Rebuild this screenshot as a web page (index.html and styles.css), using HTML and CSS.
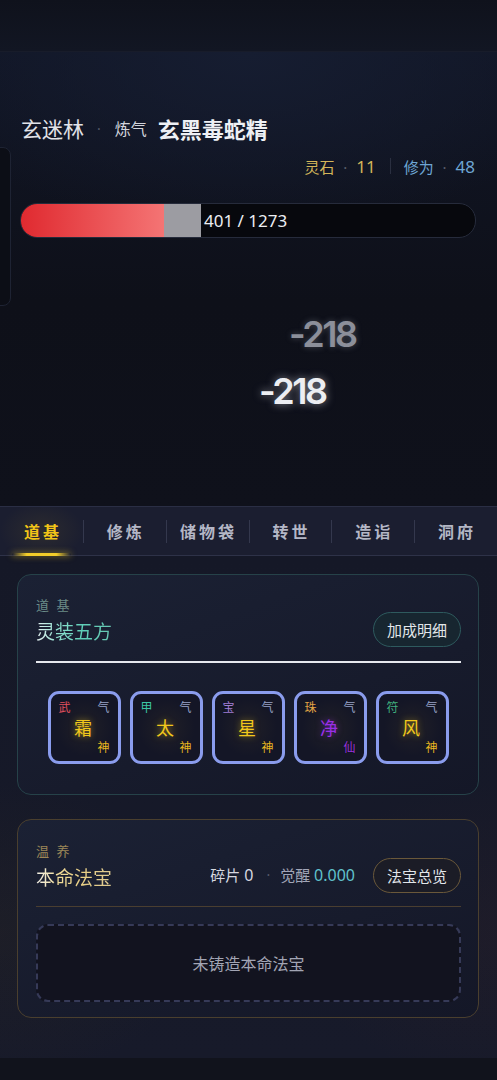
FILE: index.html
```html
<!DOCTYPE html>
<html lang="zh-CN">
<head>
    <meta charset="UTF-8">
    <meta name="viewport" content="width=device-width, initial-scale=1.0">
    <title>玄迷林</title>
    <link rel="stylesheet" href="styles.css">
</head>
<body>

    <div class="topbar"></div>

    <!-- Battle stage -->
    <div class="stage">
        <div class="side-panel"></div>

        <div class="title-row">
            <span class="place">玄迷林</span>
            <span class="dot">·</span>
            <span class="realm">炼气</span>
            <span class="enemy">玄黑毒蛇精</span>
        </div>

        <div class="stats-row">
            <span class="stone">灵石 <i>·</i> <b>11</b></span>
            <span class="sep"></span>
            <span class="cult">修为 <i>·</i> <b>48</b></span>
        </div>

        <div class="hp-bar">
            <div class="hp-fill" style="width: 143px"></div>
            <div class="hp-lost" style="width: 37px"></div>
            <span class="hp-text">401 / 1273</span>
        </div>

        <div class="dmg dmg-old">-218</div>
        <div class="dmg dmg-new">-218</div>
    </div>

    <!-- Tabs -->
    <div class="tabs">
        <div class="tab active">道基</div>
        <div class="tab">修炼</div>
        <div class="tab">储物袋</div>
        <div class="tab">转世</div>
        <div class="tab">造诣</div>
        <div class="tab">洞府</div>
    </div>

    <div class="content">
        <!-- 灵装五方 -->
        <div class="card card-teal">
            <div class="card-head">
                <div>
                    <div class="card-label">道 基</div>
                    <div class="card-title title-teal">灵装五方</div>
                </div>
                <button class="pill pill-teal">加成明细</button>
            </div>
            <div class="rule-white"></div>

            <div class="slots">
                <div class="slot">
                    <span class="s-tl c-red">武</span><span class="s-tr">气</span>
                    <span class="s-mid">霜</span>
                    <span class="s-br">神</span>
                </div>
                <div class="slot">
                    <span class="s-tl c-teal">甲</span><span class="s-tr">气</span>
                    <span class="s-mid">太</span>
                    <span class="s-br">神</span>
                </div>
                <div class="slot">
                    <span class="s-tl c-violet">宝</span><span class="s-tr">气</span>
                    <span class="s-mid">星</span>
                    <span class="s-br">神</span>
                </div>
                <div class="slot">
                    <span class="s-tl c-orange">珠</span><span class="s-tr">气</span>
                    <span class="s-mid purple">净</span>
                    <span class="s-br purple">仙</span>
                </div>
                <div class="slot">
                    <span class="s-tl c-green">符</span><span class="s-tr">气</span>
                    <span class="s-mid">风</span>
                    <span class="s-br">神</span>
                </div>
            </div>
        </div>

        <!-- 本命法宝 -->
        <div class="card card-gold">
            <div class="card-head">
                <div>
                    <div class="card-label label-gold">温 养</div>
                    <div class="card-title title-gold">本命法宝</div>
                </div>
                <div class="treasure-info">
                    <span class="shard">碎片 <b>0</b></span>
                    <span class="dot">·</span>
                    <span class="wake">觉醒 <b>0.000</b></span>
                    <button class="pill pill-gold">法宝总览</button>
                </div>
            </div>
            <div class="rule-gold"></div>
            <div class="empty-box">未铸造本命法宝</div>
        </div>
    </div>

    <div class="footer"></div>

</body>
</html>
```

FILE: styles.css
```css
body {
    margin: 0;
    width: 497px;
    height: 1080px;
    overflow: hidden;
    background: #151827;
    font-family: "Noto Sans", "Noto Sans CJK SC", sans-serif;
    color: #e4e6ee;
}

.topbar {
    height: 52px;
    background: linear-gradient(180deg, #0f121c, #121623);
    border-bottom: 1px solid #181c2a;
    box-sizing: border-box;
}

/* ---------- stage ---------- */
.stage {
    position: relative;
    height: 454px;
    box-sizing: border-box;
    padding: 62px 22px 0 20px;
    background:
        radial-gradient(ellipse 70% 40% at 50% 0%, #161d31 0%, rgba(22, 29, 49, 0) 100%),
        linear-gradient(180deg, #111626 0%, #0e1019 55%, #0f111b 100%);
}

.side-panel {
    position: absolute;
    left: -10px;
    top: 95px;
    width: 19px;
    height: 157px;
    border: 1px solid #1e2333;
    border-radius: 8px;
    background: #0c0e16;
}

.title-row {
    display: flex;
    align-items: center;
    height: 28px;
    padding-left: 1px;
}

.place {
    font-size: 21px;
    color: #e2e3e8;
}

.dot {
    color: #555a6a;
    font-size: 14px;
    margin: 0 14px 0 13px;
}

.realm {
    font-size: 16px;
    color: #d2d4dc;
    margin-right: 11px;
}

.enemy {
    font-size: 22px;
    font-weight: bold;
    color: #eef0f4;
}

.stats-row {
    display: flex;
    justify-content: flex-end;
    align-items: center;
    height: 22px;
    margin-top: 13px;
    font-size: 15px;
}

.stats-row i {
    font-style: normal;
    color: #5a5e6c;
    margin: 0 5px;
}

.stats-row b {
    font-weight: normal;
    font-size: 17px;
}

.stone {
    color: #d4b65a;
}

.cult {
    color: #6ea6d4;
}

.sep {
    width: 1px;
    height: 16px;
    background: #2a2f40;
    margin: 0 13px 0 14px;
}

.hp-bar {
    display: flex;
    align-items: center;
    height: 33px;
    margin-top: 26px;
    margin-right: -1px;
    border: 1px solid #262b3b;
    border-radius: 17px;
    background: #07080d;
    overflow: hidden;
}

.hp-fill {
    align-self: stretch;
    background: linear-gradient(90deg, #e02a30, #f47474);
}

.hp-lost {
    align-self: stretch;
    background: #9c9ca2;
}

.hp-text {
    margin-left: 3px;
    font-size: 17px;
    color: #eceef2;
}

.dmg {
    position: absolute;
    font-family: Inter, "Noto Sans", sans-serif;
    font-size: 36px;
    font-weight: 600;
    letter-spacing: -2.5px;
    line-height: 1;
}

.dmg-old {
    left: 289px;
    top: 264px;
    color: #8c8f9a;
    text-shadow: 0 0 6px rgba(170, 175, 190, 0.35);
}

.dmg-new {
    left: 259px;
    top: 321px;
    color: #eceef2;
    text-shadow: 0 0 8px rgba(230, 232, 240, 0.55);
}

/* ---------- tabs ---------- */
.tabs {
    display: grid;
    grid-template-columns: repeat(6, 1fr);
    height: 50px;
    box-sizing: border-box;
    background: #1b1e30;
    border-top: 1px solid #2a2e44;
    border-bottom: 1px solid #2e3248;
}

.tab {
    position: relative;
    display: flex;
    align-items: center;
    justify-content: center;
    font-size: 16px;
    font-weight: bold;
    letter-spacing: 3px;
    color: #b4b7c6;
    padding-left: 3px;
}

.tab + .tab::before {
    content: "";
    position: absolute;
    left: 0;
    top: 13px;
    height: 23px;
    width: 1px;
    background: #34384d;
}

.tab.active {
    color: #f2c518;
    background: radial-gradient(ellipse 50% 60% at 50% 50%, rgba(120, 100, 40, 0.18), rgba(0, 0, 0, 0));
}

.tab.active::after {
    content: "";
    position: absolute;
    left: 12px;
    right: 12px;
    bottom: -1px;
    height: 3px;
    border-radius: 2px;
    background: linear-gradient(90deg, rgba(240, 200, 40, 0), #f3cd2a 25%, #f3cd2a 75%, rgba(240, 200, 40, 0));
    box-shadow: 0 0 6px rgba(240, 200, 40, 0.6);
}

/* ---------- content ---------- */
.content {
    display: flex;
    flex-direction: column;
    gap: 24px;
    height: 502px;
    box-sizing: border-box;
    padding: 18px 18px 0 17px;
    background:
        radial-gradient(ellipse 40% 30% at 0% 75%, rgba(60, 50, 30, 0.18), rgba(0, 0, 0, 0)),
        radial-gradient(ellipse 40% 30% at 100% 75%, rgba(70, 40, 40, 0.16), rgba(0, 0, 0, 0)),
        linear-gradient(180deg, #151827, #171a2a);
}

.card {
    border-radius: 14px;
    padding: 21px 17px 0 18px;
    background: linear-gradient(160deg, #1b2134 0%, #171b2c 60%, #141727 100%);
}

.card-teal {
    height: 221px;
    box-sizing: border-box;
    border: 1px solid #264249;
}

.card-gold {
    height: 199px;
    box-sizing: border-box;
    border: 1px solid #4a3f2e;
    padding-top: 22px;
}

.card-head {
    display: flex;
    justify-content: space-between;
    align-items: flex-end;
}

.card-label {
    font-size: 13px;
    line-height: 18px;
    letter-spacing: 2px;
    color: #6c8c88;
}

.label-gold {
    color: #9c8758;
}

.card-title {
    font-size: 19px;
    line-height: 26px;
    margin-top: 5px;
    background-clip: text;
    -webkit-background-clip: text;
    color: transparent;
}

.title-teal {
    background-image: linear-gradient(90deg, #e6eef0 0%, #8fe0cf 28%, #5fcfb8 60%, #68c8b4 100%);
}

.title-gold {
    background-image: linear-gradient(90deg, #f2f0e8 0%, #f0dc98 30%, #e8cf86 60%, #ddc890 100%);
}

.pill {
    height: 35px;
    padding: 0 13px;
    border-radius: 18px;
    font-family: "Noto Sans", "Noto Sans CJK SC", sans-serif;
    font-size: 15px;
    color: #e2e6ea;
    cursor: pointer;
    margin-bottom: -2px;
}

.pill-teal {
    background: #172630;
    border: 1px solid #2e5a5e;
}

.pill-gold {
    background: #1b1c26;
    border: 1px solid #6a583a;
    margin-left: 18px;
}

.rule-white {
    height: 2px;
    margin-top: 16px;
    background: #e6e8ee;
}

.slots {
    display: flex;
    justify-content: center;
    gap: 9px;
    margin-top: 28px;
    padding-right: 1px;
}

.slot {
    width: 73px;
    height: 73px;
    box-sizing: border-box;
    border: 3px solid #8a9ced;
    border-radius: 11px;
    display: grid;
    grid-template-columns: 1fr 1fr;
    grid-template-rows: 20px 20px 20px;
    align-content: center;
    padding: 0 8px;
    background: radial-gradient(circle at 50% 50%, rgba(70, 60, 40, 0.25), rgba(0, 0, 0, 0) 60%), #141626;
    font-size: 12px;
    line-height: 20px;
}

.s-tl {
    justify-self: start;
}

.s-tr {
    justify-self: end;
    color: #98a2c8;
}

.s-mid {
    grid-column: 1 / 3;
    justify-self: center;
    font-size: 18px;
    color: #f2c81c;
    text-shadow: 0 0 6px rgba(240, 200, 30, 0.55);
    margin-right: 2px;
}

.s-br {
    grid-column: 2;
    justify-self: end;
    color: #e8b820;
}

.s-mid.purple {
    color: #9a2fe6;
    text-shadow: 0 0 6px rgba(150, 50, 230, 0.5);
}

.s-br.purple {
    color: #9830d8;
}

.c-red { color: #e0505e; }
.c-teal { color: #3cc4a4; }
.c-violet { color: #a07ed4; }
.c-orange { color: #e2a444; }
.c-green { color: #40b07e; }

.treasure-info {
    display: flex;
    align-items: center;
    font-size: 15px;
}

.treasure-info .dot {
    margin: 0 10px 0 13px;
}

.treasure-info b {
    font-weight: normal;
    font-size: 16px;
}

.shard {
    color: #d6d8e0;
}

.wake {
    color: #a2a6b8;
}

.wake b {
    color: #60c2cc;
}

.rule-gold {
    height: 1px;
    margin-top: 15px;
    background: #4a3e30;
}

.empty-box {
    display: flex;
    align-items: center;
    justify-content: center;
    height: 74px;
    margin-top: 17px;
    border: 2px dashed #363a58;
    border-radius: 12px;
    background: #12131f;
    font-size: 16px;
    color: #a2a5b4;
}

.footer {
    height: 23px;
    background: #11131c;
}
```
